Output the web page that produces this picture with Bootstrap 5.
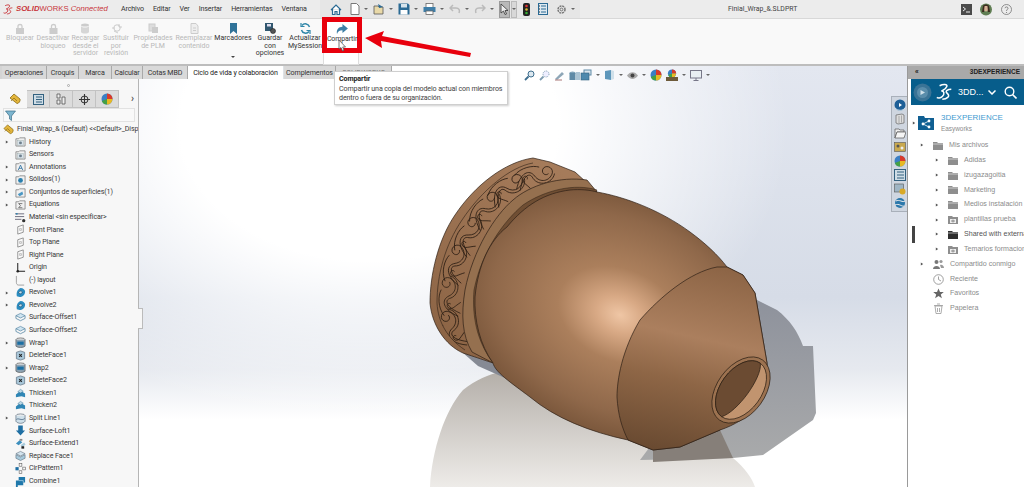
<!DOCTYPE html>
<html lang="es">
<head>
  <meta charset="UTF-8" />
  <meta name="viewport" content="width=device-width, initial-scale=1.0"/>
  <title>Finial_Wrap_&amp;.SLDPRT</title>
  <link href="https://cdn.jsdelivr.net/npm/bootstrap@5.3.2/dist/css/bootstrap.min.css" rel="stylesheet" />
  <style>
    html, body { height: 100%; }
    body {
      width: 1024px;
      height: 487px;
      overflow: hidden;
      background: #fff;
      color: #333;
      font-family: Roboto, sans-serif;
      font-size: 7.1px;
      letter-spacing: -.12px;
      line-height: 1;
      position: relative;
    }
    .ic { display: block; flex: none; }

    /* top bar */
    .sw-top { height: 19px; background: #ececec; border-bottom: 1px solid #d8d8d8; }
    .sw-brand { width: 121px; padding-left: 3px; gap: 2px; color: #c8343a; font-size: 7.7px; letter-spacing: 0; font-family: "Liberation Sans", sans-serif; }
    .sw-brand b { font-style: italic; font-weight: 700; }
    .sw-menu { gap: 9px; width: 199px; }
    .sw-tools { background: #e6e6e6; height: 18px; padding-left: 10px; width: 260px; gap: 0; }
    .sw-title { width: 380px; padding-left: 148px; font-size: 6.9px; letter-spacing: 0; color: #444; }
    .sw-caret { width: 0; height: 0; border: 2px solid transparent; border-top: 2.5px solid #666; border-bottom: 0; margin: 0 5px 0 4px; flex: none; }
    .sw-sel { background: #b9b9b9; border: 1px solid #999; height: 17px; width: 17px; }
    .sw-sel2 { background: #d8d8d8; border: 1px solid #bbb; height: 17px; width: 7px; margin: 0 6px 0 1px; }
    .sw-help { margin: 0 12px 0 9px; }

    /* ribbon */
    .sw-ribbon { height: 47px; background: #f9f9f9; border-bottom: 2px solid #bdbdbd; padding-left: 4px; }
    .sw-rb {
      border: 0; border-radius: 0; padding: 4px 0 0; background: none;
      font-size: 7px; line-height: 7.6px; letter-spacing: 0; color: #333; text-align: center;
      flex: none; display: flex; flex-direction: column; align-items: center;
    }
    .sw-rb:disabled { color: #b8b8b8; opacity: 1; background: none; }
    .sw-rb .ic { margin-bottom: 1px; }
    .w-a { width: 32px; } .w-b { width: 34px; } .w-c { width: 31px; } .w-d { width: 30px; }
    .w-e { width: 44px; } .w-f { width: 38px; } .w-g { width: 40px; } .w-h { width: 34px; }
    .w-i { width: 36px; }
    .sw-dropcaret { width: 0; height: 0; border: 2px solid transparent; border-top: 2.5px solid #444; border-bottom: 0; margin-top: 13px; }

    /* work area */
    .sw-work { height: 421px; position: relative; }
    .sw-tabs {
      position: absolute; top: 0; left: 0; z-index: 3; height: 13px; width: 392px; padding-left: 2px;
      background: #d4d4d4; border: 0; flex-wrap: nowrap;
    }
    .sw-tabs .nav-link {
      border: 0; border-right: 1px solid #a9a9a9; border-radius: 0; margin: 0; padding: 0;
      height: 13px; line-height: 13px; font-size: 7.1px; color: #333; background: #d9d9d9; text-align: center;
      white-space: nowrap;
    }
    .sw-tabs .nav-link.active { background: #fff; color: #222; }
    .t1 { width: 45px; } .t2 { width: 32px; } .t3 { width: 33px; } .t4 { width: 31px; }
    .t5 { width: 45px; } .t6 { width: 96px; } .t7 { width: 52px; } .t8 { width: 56px; color: #777 !important; }

    /* feature manager */
    .sw-left { width: 139px; flex: none; background: #f7f7f7; border-right: 1px solid #b5b5b5; padding-top: 13px; }
    .sw-grip { height: 11px; padding-top: 5px; }
    .sw-dot { width: 3px; height: 3px; border: 1px solid #aaa; border-radius: 50%; margin-left: 67px; }
    .sw-pm { height: 18px; padding-left: 2px; }
    .sw-pm-cell { width: 23px; height: 18px; background: #dcdcdc; border: 1px solid #c2c2c2; border-left: 0; }
    .sw-pm-cell.on { background: #f7f7f7; border: 0; width: 25px; }
    .sw-chev { margin-left: 12px; font-size: 10px; font-weight: 700; color: #555; }
    .sw-filter { height: 14px; margin: 0 3px; background: #f9f9f9; border: 1px solid #e2e2e2; padding-left: 1px; }
    .sw-tree { background: transparent; border-radius: 0; margin-top: 1px; }
    .sw-tree .list-group-item {
      background: transparent; border: 0; padding: 0; height: 12.57px; line-height: 12.57px;
      color: #3a3a3a; font-size: 7.1px; white-space: nowrap; overflow: hidden;
    }
    .sw-tw { width: 15px; flex: none; padding-left: 5px; }
    .sw-tw2 { width: 3px; flex: none; }
    .sw-tree .ic { margin-right: 3px; }
    .sw-tw .ic { margin: 0; }
    .sw-handle { position: absolute; left: 138px; top: 242px; width: 5px; height: 21px; background: #f7f7f7; border: 1px solid #bbb; border-left: 0; z-index: 2; }

    /* graphics area */
    .sw-view {
      flex: 1 1 auto; position: relative; overflow: hidden;
      background:
        radial-gradient(ellipse 420px 300px at 230px 60px, #fff 45%, rgba(255,255,255,0) 100%),
        linear-gradient(180deg, #e3e7f0 0, #d6dce7 55%, #e6e9ef 72%, #fff 84%, #fff 100%);
    }
    .sw-model { display: block; position: absolute; left: 0; top: 0; }
    .sw-hud { position: absolute; left: 385px; top: 3px; }
    .sw-hud .sw-caret { margin: 0 0 0 4px; }
    .sw-vbar { position: absolute; right: 0; top: 30px; width: 16px; padding-top: 2px; background: #cfd6e0; border: 1px solid #a9b0ba; border-right: 0; z-index: 2; }
    .sw-vbar .ic { margin: 0 auto 2px; }

    /* task pane */
    .sw-right { width: 117px; flex: none; background: #fff; border-left: 1px solid #9a9a9a; padding-left: 3px; position: relative; }
    .sw-rhead { height: 13px; margin-left: -3px; background: #a9a9a9; color: #222; font-size: 6.5px; letter-spacing: 0; font-weight: 700; padding: 0 4px 0 7px; font-family: "Liberation Sans", sans-serif; }
    .sw-blue { height: 26px; background: #075d8b; color: #cfe0ea; font-size: 9px; letter-spacing: 0; padding-left: 2px; }
    .sw-blue span { width: 26px; margin-left: 4px; font-family: "Liberation Sans", sans-serif; }
    .sw-search { margin-left: 8px; }
    .sw-drive { font-family: "Liberation Sans", sans-serif; font-size: 7.1px; letter-spacing: 0; color: #8b8b8b; }
    .sw-list { margin-top: 3px; }
    .sw-drive .list-group-item {
      background: transparent; border: 0; padding: 0; height: 14.85px; line-height: 14.85px;
      color: #8b8b8b; white-space: nowrap; display: flex; align-items: center;
    }
    .sw-root { height: 30px; padding: 5px 0 0 1px; }
    .sw-root-tw { margin-right: 2px; }
    .sw-root-ic { margin-right: 7px; }
    .sw-root-name { color: #3f9bd0; font-size: 8px; margin-top: 1px; }
    .sw-root-sub { color: #8b8b8b; font-size: 6.4px; margin-top: 4px; }
    .lv1 { padding-left: 9px !important; }
    .lv2 { padding-left: 24px !important; }
    .sw-drive .list-group-item .ic { margin-right: 6px; }
    .sw-drive .list-group-item .ic:first-child { margin-right: 9px; }
    .sw-sp { width: 13px; flex: none; }
    .sw-drive .cur { color: #555; }
    .sw-marker { position: absolute; left: 4px; top: 160px; width: 3px; height: 17px; background: #444; }

    /* callouts */
    .sw-tip {
      position: absolute; left: 334px; top: 71px; width: 174px; height: 34px; z-index: 6;
      background: #fff; border: 1px solid #cfcfcf; box-shadow: 1px 1px 2px rgba(0,0,0,.2);
      padding: 3px 0 0 4px; font-size: 7.1px; line-height: 8.8px; color: #444; white-space: nowrap;
    }
    .sw-tip b { display: block; color: #222; margin-bottom: 1.5px; }
    .sw-share {
      position: absolute; left: 322px; top: 17px; width: 40px; height: 36px; z-index: 5;
      background: #fff; border: 5px solid #e8000d; display: flex; flex-direction: column; align-items: center;
      padding-top: 2px; font-size: 7px; color: #333;
    }
    .sw-share .ic { margin-bottom: 2px; }
    .sw-under { position: absolute; left: 323px; top: 52px; width: 36px; height: 13px; background: #fff; border: 1px solid #ddd; border-top: 0; z-index: 4; }
    .sw-arrow { position: absolute; left: 360px; top: 25px; z-index: 7; }
    .sw-cursor { position: absolute; left: 338px; top: 39px; z-index: 8; }
  </style>
</head>
<body>
  <svg width="0" height="0" class="position-absolute">
    <defs>
      <symbol id="tw" viewBox="0 0 5 5"><path d="M1 0.5L4 2.5L1 4.5Z" fill="#555"/></symbol>
      <symbol id="logo" viewBox="0 0 20 20"><path d="M4 3C8 1 13 1 12 4C11 7 8 8 6 9C9 9 10 12 7 15C5 17 2 17 1 16M17 7C13 7 10 9 12 11C14 13 15 14 13 16C11 18 8 18 7 18" fill="none" stroke="currentColor" stroke-width="1.7"/></symbol>
      <symbol id="fold-g" viewBox="0 0 12 12"><path d="M1 3V11H11V2H5L4 3Z" fill="#f0f0f0" stroke="#777" stroke-width=".8"/><rect x="3" y="5" width="6" height="5" fill="#d8e2ea" stroke="#9aa" stroke-width=".5"/><circle cx="6" cy="7.500" r="1.600" fill="#6d7f8c"/></symbol>
      <symbol id="fold-b" viewBox="0 0 12 12"><path d="M1 3V11H11V2H5L4 3Z" fill="#f0f0f0" stroke="#777" stroke-width=".8"/><circle cx="6" cy="7" r="2.600" fill="#2a7fae"/></symbol>
      <symbol id="fold-s" viewBox="0 0 12 12"><path d="M1 3V11H11V2H5L4 3Z" fill="#f0f0f0" stroke="#777" stroke-width=".8"/><path d="M3 8L8 5L9 8L5 10Z" fill="#4a97c4"/></symbol>
      <symbol id="fold-a" viewBox="0 0 12 12"><path d="M1 3V11H11V2H5L4 3Z" fill="#f0f0f0" stroke="#777" stroke-width=".8"/><path d="M3.500 10L6 4.500L8.500 10M4.500 8H7.500" fill="none" stroke="#2a6f9f" stroke-width=".9"/></symbol>
      <symbol id="fold-e" viewBox="0 0 12 12"><path d="M1 3V11H11V2H5L4 3Z" fill="#f0f0f0" stroke="#777" stroke-width=".8"/><path d="M8 5H4L6 7.200L4 9.500H8" fill="none" stroke="#555" stroke-width=".8"/></symbol>
      <symbol id="mat" viewBox="0 0 12 12"><path d="M0 2H10M0 5H10M0 8H7" stroke="#667" stroke-width="1"/><circle cx="2" cy="2" r="1" fill="#2a7fae"/><circle cx="9.500" cy="9.500" r="1.800" fill="#333"/></symbol>
      <symbol id="plane" viewBox="0 0 12 12"><path d="M3 3L9 1V9L3 11Z" fill="#fafafa" stroke="#777" stroke-width=".8"/><path d="M5 5H7V7H5Z" fill="none" stroke="#999" stroke-width=".6"/></symbol>
      <symbol id="orig" viewBox="0 0 12 12"><path d="M3 1V10H11" fill="none" stroke="#222" stroke-width="1.100"/><circle cx="3" cy="10" r="1.400" fill="#222"/></symbol>
      <symbol id="sk" viewBox="0 0 12 12"><path d="M10 11H4C2.500 11 1.500 10 1.500 8V1" fill="none" stroke="#888" stroke-width=".8"/></symbol>
      <symbol id="rev" viewBox="0 0 12 12"><path d="M2 10C1 6 3 2 6 1C9 1 11 3 11 5C11 8 9 11 5 11Z" fill="#2b8cc0"/><path d="M4 6C5 4 7 4 8 5.500C7 8 5 8 4 6Z" fill="#bfe0f0" stroke="#123" stroke-width=".5"/></symbol>
      <symbol id="soff" viewBox="0 0 12 12"><path d="M1 4L6 1.500L11 4L6 6.500Z" fill="#cfe4f0" stroke="#4d7f9f" stroke-width=".7"/><path d="M1 7L6 9.500L11 7M1 4V7M11 4V7" fill="none" stroke="#4d7f9f" stroke-width=".8"/></symbol>
      <symbol id="wrap" viewBox="0 0 12 12"><ellipse cx="6" cy="3" rx="5" ry="2" fill="#ddd" stroke="#555" stroke-width=".7"/><path d="M1 3V10C3 12 9 12 11 10V3" fill="#8da3b3" stroke="#555" stroke-width=".7"/><rect x="2.500" y="5" width="7" height="3.500" fill="#1c6fa3"/></symbol>
      <symbol id="dfac" viewBox="0 0 12 12"><path d="M1.500 2.500L6 1L10.500 2.500V9.500L6 11L1.500 9.500Z" fill="#a9c7d9" stroke="#567" stroke-width=".7"/><path d="M4.500 4.500L7.500 7.500M7.500 4.500L4.500 7.500" stroke="#222" stroke-width="1.100"/></symbol>
      <symbol id="thk" viewBox="0 0 12 12"><path d="M1 7L6 3L11 6V10L7 9L1 10Z" fill="#2f86b5"/><path d="M3 4L6 1.500L9 3.500L6 5.500Z" fill="#bcd9e8" stroke="#2d6b8f" stroke-width=".5"/></symbol>
      <symbol id="spl" viewBox="0 0 12 12"><ellipse cx="6" cy="3" rx="5" ry="2" fill="#eee" stroke="#567" stroke-width=".7"/><path d="M1 3V9C3 12 9 12 11 9V3" fill="#cfe0ea" stroke="#567" stroke-width=".7"/><path d="M1.500 7C4 5 7 9 10.500 6" fill="none" stroke="#246" stroke-width=".7"/></symbol>
      <symbol id="lof" viewBox="0 0 12 12"><path d="M3.500 0.500H8.500V6H11L6 11.500L1 6H3.500Z" fill="#1f6fa3"/></symbol>
      <symbol id="ext" viewBox="0 0 12 12"><path d="M1 6L5 2.500L8 4.500L4 8Z" fill="#3d8fbe"/><path d="M6 8L10 5L11.500 7L8 10Z" fill="#a8cadb"/><rect x="7" y="9" width="3" height="2.600" fill="#222"/><rect x="5" y="1" width="3" height="2" fill="#888"/></symbol>
      <symbol id="rep" viewBox="0 0 12 12"><path d="M1 4L6 1.500L11 4L6 6.500Z" fill="#d3e4ee" stroke="#567" stroke-width=".6"/><path d="M1 5V9L6 11.500L11 9V5L6 7.500Z" fill="#a8c9db" stroke="#567" stroke-width=".6"/></symbol>
      <symbol id="cir" viewBox="0 0 12 12"><rect x="4.500" y="0.500" width="3" height="3" fill="none" stroke="#555" stroke-width=".6"/><rect x="8.500" y="4.500" width="3" height="3" fill="none" stroke="#555" stroke-width=".6"/><rect x="4.500" y="8.500" width="3" height="3" fill="none" stroke="#555" stroke-width=".6"/><rect x="0.500" y="4.500" width="3.500" height="3.500" fill="#1f6fa3"/></symbol>
      <symbol id="com" viewBox="0 0 12 12"><path d="M4 1H11V7H9V10H3V12H1V5H4Z" fill="#1f78ab"/><path d="M4 5H9V7" fill="none" stroke="#bfe0f0" stroke-width=".7"/></symbol>
      <symbol id="part" viewBox="0 0 12 12"><path d="M1 5L5 1L11 6C11.500 8 10 10.500 8 10.500Z" fill="#e4b63c" stroke="#8a6c17" stroke-width=".8"/><path d="M2 8L5 5L8 8" fill="none" stroke="#8a6c17" stroke-width=".7"/></symbol>
      <symbol id="dfold" viewBox="0 0 10 9"><path d="M0 1H4L5 2H10V9H0Z" fill="#8e8e8e"/><path d="M0 3H10" stroke="#dcdcdc" stroke-width=".8"/></symbol>
      <symbol id="dfold-k" viewBox="0 0 10 9"><path d="M0 1H4L5 2H10V9H0Z" fill="#2e2e2e"/><path d="M0 3H10" stroke="#ccc" stroke-width=".8"/></symbol>
      <symbol id="dfold-p" viewBox="0 0 10 9"><path d="M0 1H4L5 2H10V9H0Z" fill="#8e8e8e"/><rect x="2" y="4" width="6" height="4" fill="#eee"/><path d="M3 6H7M5 4.500V7.500" stroke="#777" stroke-width=".8"/></symbol>
      <symbol id="colorball" viewBox="0 0 12 12"><circle cx="6" cy="6" r="5.500" fill="#3b7fc4"/><path d="M6 6V0.500A5.500 5.500 0 0 1 11.500 6Z" fill="#d93a2b"/><path d="M6 6H11.500A5.500 5.500 0 0 1 6 11.500Z" fill="#e8b923"/><path d="M6 6V11.500A5.500 5.500 0 0 1 .8 8Z" fill="#45a045"/></symbol>
      <symbol id="globe" viewBox="0 0 12 12"><circle cx="6" cy="6" r="5.500" fill="#1d5f97"/><path d="M5 4L8 6L5 8Z" fill="#fff"/><path d="M1 9C4 12 9 12 11 9" fill="none" stroke="#cfe0ea" stroke-width=".9"/></symbol>
    </defs>
  </svg>

  <!-- barra superior -->
  <div class="sw-top d-flex align-items-center">
    <div class="sw-brand d-flex align-items-center">
      <svg class="ic" width="11" height="11"><use href="#logo"/></svg>
      <span><b>SOLID</b>WORKS&nbsp;<i>Connected</i></span>
    </div>
    <div class="sw-menu d-flex align-items-center">
      <span>Archivo</span><span>Editar</span><span>Ver</span><span>Insertar</span><span>Herramientas</span><span>Ventana</span>
      <svg class="ic ms-1" width="8" height="8" viewBox="0 0 8 8"><path d="M1 7L3.500 4.500M2.500 2.500L5.500 5.500M4 1.500L6.500 4" stroke="#777" stroke-width="1.200"/></svg>
    </div>
    <div class="sw-tools d-flex align-items-center">
      <svg class="ic" width="12" height="11" viewBox="0 0 12 11"><path d="M1 6L6 1L11 6M2.500 5V10.500H5V7.500H7V10.500H9.500V5" fill="#fff" stroke="#2b6a94" stroke-width="1.200"/></svg>
      <svg class="ic ms-2" width="10" height="12" viewBox="0 0 10 12"><path d="M1 .5H6.500L9 3V11.500H1Z" fill="#fff" stroke="#777"/></svg>
      <span class="sw-caret"></span>
      <svg class="ic" width="12" height="12" viewBox="0 0 12 12"><path d="M1 3H5L6 4H10V11H1Z" fill="#e9d9a8" stroke="#555" stroke-width=".8"/><path d="M5 1L10 4L6 5Z" fill="#2b6a94"/></svg>
      <span class="sw-caret"></span>
      <svg class="ic" width="12" height="12" viewBox="0 0 12 12"><path d="M.5.5H10L11.500 2V11.500H.5Z" fill="#2b6a94"/><rect x="3" y="1" width="6" height="3.500" fill="#d7e4ec"/><rect x="2.500" y="7" width="7" height="4.500" fill="#fff"/></svg>
      <span class="sw-caret"></span>
      <svg class="ic" width="13" height="12" viewBox="0 0 13 12"><rect x="3" y=".5" width="7" height="4" fill="#fff" stroke="#666" stroke-width=".8"/><rect x=".5" y="4" width="12" height="5" fill="#3f7ea8"/><rect x="3" y="8" width="7" height="3.500" fill="#fff" stroke="#666" stroke-width=".8"/></svg>
      <span class="sw-caret"></span>
      <svg class="ic" width="12" height="10" viewBox="0 0 12 10"><path d="M4 1L1 4L4 7M1 4H7C10 4 11 6 10 9" fill="none" stroke="#bbb" stroke-width="1.500"/></svg>
      <span class="sw-caret"></span>
      <svg class="ic" width="12" height="10" viewBox="0 0 12 10"><path d="M8 1L11 4L8 7M11 4H5C2 4 1 6 2 9" fill="none" stroke="#bbb" stroke-width="1.500"/></svg>
      <span class="sw-caret"></span>
      <div class="sw-sel d-flex align-items-center justify-content-center">
        <svg class="ic" width="9" height="12" viewBox="0 0 9 12"><path d="M1 1V10L3.500 8L5 11.500L6.500 11L5 7.500H8Z" fill="#eee" stroke="#333" stroke-width=".8"/></svg>
      </div>
      <div class="sw-sel2 d-flex align-items-center justify-content-center"><span class="sw-caret m-0"></span></div>
      <svg class="ic" width="7" height="13" viewBox="0 0 7 13"><rect width="7" height="13" rx="2" fill="#222"/><circle cx="3.500" cy="3" r="1.300" fill="#d33"/><circle cx="3.500" cy="6.500" r="1.300" fill="#db3"/><circle cx="3.500" cy="10" r="1.300" fill="#3a3"/></svg>
      <svg class="ic ms-2" width="10" height="12" viewBox="0 0 10 12"><rect x=".5" y=".5" width="9" height="11" fill="#dfe9f0" stroke="#2b6a94"/><path d="M3 3H8M3 6H8M3 9H8" stroke="#2b6a94"/><path d="M1 3H2M1 6H2M1 9H2" stroke="#333"/></svg>
      <svg class="ic ms-2" width="11" height="11" viewBox="0 0 11 11"><circle cx="5.500" cy="5.500" r="3.500" fill="none" stroke="#777" stroke-width="1.500" stroke-dasharray="2 .8"/><circle cx="5.500" cy="5.500" r="1.400" fill="none" stroke="#777"/></svg>
      <span class="sw-caret"></span>
    </div>
    <div class="sw-title">Finial_Wrap_&amp;.SLDPRT</div>
    <svg class="ic ms-auto" width="11" height="11" viewBox="0 0 11 11"><rect width="11" height="11" fill="#4a4a4a"/><path d="M2 3L4.500 5L2 7M5 8H9" fill="none" stroke="#fff" stroke-width=".9"/></svg>
    <svg class="ic ms-2" width="12" height="13" viewBox="0 0 12 13"><circle cx="6" cy="6.500" r="6" fill="#5f7d52"/><ellipse cx="6" cy="5.500" rx="2.200" ry="3" fill="#d7b196"/><path d="M3 3C4 1 8 1 9 3L10 9H8L7.500 3H4.500L4 9H2Z" fill="#3c2a1f"/></svg>
    <svg class="ic sw-help" width="11" height="11" viewBox="0 0 11 11"><circle cx="5.500" cy="5.500" r="5" fill="none" stroke="#777" stroke-width=".8"/><path d="M4 4.200C4 2.500 7 2.500 7 4.200C7 5.500 5.500 5.500 5.500 7" fill="none" stroke="#777" stroke-width=".9"/><circle cx="5.500" cy="8.500" r=".6" fill="#777"/></svg>
  </div>

  <!-- cinta de opciones -->
  <div class="sw-ribbon d-flex">
    <button class="btn sw-rb w-a" disabled><svg class="ic" width="11" height="11" viewBox="0 0 11 11"><rect x="1" y="5" width="8" height="6" fill="#ccc"/><path d="M3 5V3C3 1 7 1 7 3V5" fill="none" stroke="#ccc" stroke-width="1.300"/></svg>Bloquear</button>
    <button class="btn sw-rb w-b" disabled><svg class="ic" width="11" height="11" viewBox="0 0 11 11"><rect x="1.500" y="5" width="8" height="6" fill="#ccc"/><path d="M3.500 5V3C3.500 1 7.500 1 7.500 3V5" fill="none" stroke="#ccc" stroke-width="1.300"/></svg>Desactivar<br>bloqueo</button>
    <button class="btn sw-rb w-c" disabled><svg class="ic" width="11" height="11" viewBox="0 0 11 11"><ellipse cx="5" cy="2" rx="4" ry="1.600" fill="#ccc"/><path d="M1 3V9C2 11 8 11 9 9V3C8 5 2 5 1 3Z" fill="#d6d6d6"/></svg>Recargar<br>desde el<br>servidor</button>
    <button class="btn sw-rb w-d" disabled><svg class="ic" width="11" height="11" viewBox="0 0 11 11"><path d="M1 5H4M3 8L7 10" stroke="#ccc"/><circle cx="6" cy="5" r="3.200" fill="none" stroke="#ccc"/><path d="M8 1V4H11" fill="none" stroke="#ccc"/></svg>Sustituir<br>por<br>revisión</button>
    <button class="btn sw-rb w-e" disabled><svg class="ic" width="11" height="11" viewBox="0 0 11 11"><rect x="1" y="1" width="6" height="7" fill="#ddd" stroke="#ccc"/><rect x="4" y="4" width="6" height="6" fill="#ccc"/></svg>Propiedades<br>de PLM</button>
    <button class="btn sw-rb w-f" disabled><svg class="ic" width="11" height="11" viewBox="0 0 11 11"><path d="M2 .5H7L9 3V10.500H2Z" fill="#eee" stroke="#ccc"/><path d="M4 5H7M4 7.500H7" stroke="#ccc"/></svg>Reemplazar<br>contenido</button>
    <button class="btn sw-rb w-g"><svg class="ic" width="9" height="11" viewBox="0 0 9 11"><path d="M1 0H8V11L4.500 8L1 11Z" fill="#2f7298"/></svg>Marcadores<span class="sw-dropcaret"></span></button>
    <button class="btn sw-rb w-h"><svg class="ic" width="11" height="11" viewBox="0 0 11 11"><rect x="0" y="0" width="8" height="8" fill="#31576f"/><rect x="2" y="1" width="4" height="2.500" fill="#dde"/><circle cx="8" cy="8" r="2.500" fill="#555" stroke="#222" stroke-width=".6"/></svg>Guardar<br>con<br>opciones</button>
    <button class="btn sw-rb w-i"><svg class="ic" width="11" height="11" viewBox="0 0 11 11"><path d="M9.500 4A4.300 4.300 0 0 0 2 2.500M1.500 7A4.300 4.300 0 0 0 9 8.500" fill="none" stroke="#2f86a8" stroke-width="1.500"/><path d="M1 0V3.500H4.500M10 11V7.500H6.500" fill="none" stroke="#2f86a8" stroke-width="1.200"/></svg>Actualizar<br>MySession</button>
  </div>

  <!-- zona de trabajo -->
  <div class="sw-work d-flex">
    <ul class="nav nav-tabs sw-tabs">
      <li class="nav-item"><a class="nav-link t1" href="#">Operaciones</a></li>
      <li class="nav-item"><a class="nav-link t2" href="#">Croquis</a></li>
      <li class="nav-item"><a class="nav-link t3" href="#">Marca</a></li>
      <li class="nav-item"><a class="nav-link t4" href="#">Calcular</a></li>
      <li class="nav-item"><a class="nav-link t5" href="#">Cotas MBD</a></li>
      <li class="nav-item"><a class="nav-link t6 active" href="#">Ciclo de vida y colaboración</a></li>
      <li class="nav-item"><a class="nav-link t7" href="#">Complementos</a></li>
      <li class="nav-item"><a class="nav-link t8" href="#">SOLIDWORKS</a></li>
    </ul>

    <div class="sw-left">
      <div class="sw-grip"><div class="sw-dot"></div></div>
      <div class="sw-pm d-flex align-items-center">
        <div class="sw-pm-cell on d-flex align-items-center justify-content-center"><svg class="ic" width="12" height="12"><use href="#part"/></svg></div>
        <div class="sw-pm-cell d-flex align-items-center justify-content-center"><svg class="ic" width="11" height="11" viewBox="0 0 11 11"><rect x=".5" y=".5" width="10" height="10" fill="#cfdde6" stroke="#33617f"/><path d="M3 3H9M3 5.500H9M3 8H9" stroke="#33617f"/></svg></div>
        <div class="sw-pm-cell d-flex align-items-center justify-content-center"><svg class="ic" width="10" height="12" viewBox="0 0 10 12"><path d="M1 1H4V5H1ZM6 4H9V11H6ZM1 7H4V11H1Z" fill="#eee" stroke="#555" stroke-width=".8"/></svg></div>
        <div class="sw-pm-cell d-flex align-items-center justify-content-center"><svg class="ic" width="11" height="11" viewBox="0 0 11 11"><circle cx="5.500" cy="5.500" r="3.500" fill="none" stroke="#333"/><path d="M5.500 0V11M0 5.500H11" stroke="#333" stroke-width="1.100"/></svg></div>
        <div class="sw-pm-cell d-flex align-items-center justify-content-center"><svg class="ic" width="12" height="12"><use href="#colorball"/></svg></div>
        <span class="sw-chev">›</span>
      </div>
      <div class="sw-filter d-flex align-items-center">
        <svg class="ic" width="11" height="11" viewBox="0 0 11 11"><path d="M.5 1H10.500L6.500 6V10.500L4.500 9V6Z" fill="#7cb5cf" stroke="#3c6d86" stroke-width=".7"/></svg>
      </div>
      <ul class="list-group sw-tree">
        <li class="list-group-item d-flex align-items-center"><span class="sw-tw2"></span><svg class="ic" width="11" height="11"><use href="#part"/></svg>Finial_Wrap_&amp; (Default) &lt;&lt;Default&gt;_Disp</li>
        <li class="list-group-item d-flex align-items-center"><span class="sw-tw"><svg class="ic" width="4" height="4"><use href="#tw"/></svg></span><svg class="ic" width="11" height="11"><use href="#fold-g"/></svg>History</li>
        <li class="list-group-item d-flex align-items-center"><span class="sw-tw"></span><svg class="ic" width="11" height="11"><use href="#fold-g"/></svg>Sensors</li>
        <li class="list-group-item d-flex align-items-center"><span class="sw-tw"><svg class="ic" width="4" height="4"><use href="#tw"/></svg></span><svg class="ic" width="11" height="11"><use href="#fold-a"/></svg>Annotations</li>
        <li class="list-group-item d-flex align-items-center"><span class="sw-tw"><svg class="ic" width="4" height="4"><use href="#tw"/></svg></span><svg class="ic" width="11" height="11"><use href="#fold-b"/></svg>Sólidos(1)</li>
        <li class="list-group-item d-flex align-items-center"><span class="sw-tw"><svg class="ic" width="4" height="4"><use href="#tw"/></svg></span><svg class="ic" width="11" height="11"><use href="#fold-s"/></svg>Conjuntos de superficies(1)</li>
        <li class="list-group-item d-flex align-items-center"><span class="sw-tw"><svg class="ic" width="4" height="4"><use href="#tw"/></svg></span><svg class="ic" width="11" height="11"><use href="#fold-e"/></svg>Equations</li>
        <li class="list-group-item d-flex align-items-center"><span class="sw-tw"></span><svg class="ic" width="11" height="11"><use href="#mat"/></svg>Material &lt;sin especificar&gt;</li>
        <li class="list-group-item d-flex align-items-center"><span class="sw-tw"></span><svg class="ic" width="11" height="11"><use href="#plane"/></svg>Front Plane</li>
        <li class="list-group-item d-flex align-items-center"><span class="sw-tw"></span><svg class="ic" width="11" height="11"><use href="#plane"/></svg>Top Plane</li>
        <li class="list-group-item d-flex align-items-center"><span class="sw-tw"></span><svg class="ic" width="11" height="11"><use href="#plane"/></svg>Right Plane</li>
        <li class="list-group-item d-flex align-items-center"><span class="sw-tw"></span><svg class="ic" width="11" height="11"><use href="#orig"/></svg>Origin</li>
        <li class="list-group-item d-flex align-items-center"><span class="sw-tw"></span><svg class="ic" width="11" height="11"><use href="#sk"/></svg>(-) layout</li>
        <li class="list-group-item d-flex align-items-center"><span class="sw-tw"><svg class="ic" width="4" height="4"><use href="#tw"/></svg></span><svg class="ic" width="11" height="11"><use href="#rev"/></svg>Revolve1</li>
        <li class="list-group-item d-flex align-items-center"><span class="sw-tw"><svg class="ic" width="4" height="4"><use href="#tw"/></svg></span><svg class="ic" width="11" height="11"><use href="#rev"/></svg>Revolve2</li>
        <li class="list-group-item d-flex align-items-center"><span class="sw-tw"></span><svg class="ic" width="11" height="11"><use href="#soff"/></svg>Surface-Offset1</li>
        <li class="list-group-item d-flex align-items-center"><span class="sw-tw"></span><svg class="ic" width="11" height="11"><use href="#soff"/></svg>Surface-Offset2</li>
        <li class="list-group-item d-flex align-items-center"><span class="sw-tw"><svg class="ic" width="4" height="4"><use href="#tw"/></svg></span><svg class="ic" width="11" height="11"><use href="#wrap"/></svg>Wrap1</li>
        <li class="list-group-item d-flex align-items-center"><span class="sw-tw"></span><svg class="ic" width="11" height="11"><use href="#dfac"/></svg>DeleteFace1</li>
        <li class="list-group-item d-flex align-items-center"><span class="sw-tw"><svg class="ic" width="4" height="4"><use href="#tw"/></svg></span><svg class="ic" width="11" height="11"><use href="#wrap"/></svg>Wrap2</li>
        <li class="list-group-item d-flex align-items-center"><span class="sw-tw"></span><svg class="ic" width="11" height="11"><use href="#dfac"/></svg>DeleteFace2</li>
        <li class="list-group-item d-flex align-items-center"><span class="sw-tw"></span><svg class="ic" width="11" height="11"><use href="#thk"/></svg>Thicken1</li>
        <li class="list-group-item d-flex align-items-center"><span class="sw-tw"></span><svg class="ic" width="11" height="11"><use href="#thk"/></svg>Thicken2</li>
        <li class="list-group-item d-flex align-items-center"><span class="sw-tw"><svg class="ic" width="4" height="4"><use href="#tw"/></svg></span><svg class="ic" width="11" height="11"><use href="#spl"/></svg>Split Line1</li>
        <li class="list-group-item d-flex align-items-center"><span class="sw-tw"></span><svg class="ic" width="11" height="11"><use href="#lof"/></svg>Surface-Loft1</li>
        <li class="list-group-item d-flex align-items-center"><span class="sw-tw"></span><svg class="ic" width="11" height="11"><use href="#ext"/></svg>Surface-Extend1</li>
        <li class="list-group-item d-flex align-items-center"><span class="sw-tw"></span><svg class="ic" width="11" height="11"><use href="#rep"/></svg>Replace Face1</li>
        <li class="list-group-item d-flex align-items-center"><span class="sw-tw"></span><svg class="ic" width="11" height="11"><use href="#cir"/></svg>CirPattern1</li>
        <li class="list-group-item d-flex align-items-center"><span class="sw-tw"></span><svg class="ic" width="11" height="11"><use href="#com"/></svg>Combine1</li>
      </ul>
    </div>
    <div class="sw-handle"></div>

    <div class="sw-view">
      <svg class="sw-model" width="768" height="421" viewBox="139 66 768 421">
        <defs>
          <linearGradient id="gFloor" gradientUnits="userSpaceOnUse" x1="0" y1="370" x2="0" y2="490">
            <stop offset="0" stop-color="#b3aea8"/><stop offset="1" stop-color="#efedea"/>
          </linearGradient>
          <linearGradient id="gShadow" gradientUnits="userSpaceOnUse" x1="0" y1="300" x2="0" y2="460">
            <stop offset="0" stop-color="#8e929c"/><stop offset="1" stop-color="#a9aaab"/>
          </linearGradient>
          <radialGradient id="gBody" gradientUnits="userSpaceOnUse" cx="0" cy="0" r="1" gradientTransform="translate(620 315) rotate(23) scale(190 135)">
            <stop offset="0" stop-color="#efc6a5"/><stop offset=".13" stop-color="#d8a985"/><stop offset=".34" stop-color="#ab7f5c"/><stop offset=".7" stop-color="#8f684a"/><stop offset="1" stop-color="#6d4c32"/>
          </radialGradient>
          <linearGradient id="gNose" gradientUnits="userSpaceOnUse" x1="690" y1="262" x2="648" y2="448">
            <stop offset="0" stop-color="#8d6546"/><stop offset=".38" stop-color="#ab7f5e"/><stop offset=".62" stop-color="#8e6646"/><stop offset="1" stop-color="#694a31"/>
          </linearGradient>
          <linearGradient id="gCollar" gradientUnits="userSpaceOnUse" x1="540" y1="160" x2="440" y2="340">
            <stop offset="0" stop-color="#a57b5a"/><stop offset="1" stop-color="#8c6445"/>
          </linearGradient>
          <clipPath id="cBand"><path d="M533,163 C510,167 482,190 462,220 C445,245 437,275 437,303 C438,322 447,338 465,350 L472,352 C462,335 461,315 465,290 C473,250 495,215 513,200 C530,185 560,176 587,180 L550,166Z"/></clipPath>
          <path id="orn" d="M-20,8 C-14,-8 -4,-10 0,-2 C4,6 14,6 18,-2 C20,-8 12,-12 9,-7 C7,-3 11,0 14,-2 M-17,10 C-11,-5 -4,-7 -2,0 C2,9 16,9 20,-1 M-20,-6 C-12,-13 0,-13 6,-10 M-6,10 C-10,4 -14,2 -12,-2 C-10,-5 -6,-3 -8,0" fill="none" stroke="#2e2015" stroke-width=".8"/>
        </defs>

        <!-- sombras -->
        <path d="M500,372 C540,395 690,440 733,458 C745,468 752,478 755,487 L430,487 C432,450 445,410 463,390 C475,380 490,374 500,372Z" fill="url(#gFloor)"/>
        <path d="M757,300 L777,310 C790,320 798,332 803,346 L813,346 L816,413 L813,420 L763,455 L733,458 L640,460 L700,380Z" fill="url(#gShadow)"/>
        <path d="M653,450 L720,430 L733,458 L653,462Z" fill="#867f79"/>
        <path d="M462,352 L478,366 L505,378 L510,372 L490,362Z" fill="#868a94"/>

        <!-- collar -->
        <path d="M533,158 C505,162 475,185 455,215 C438,240 430,275 430,303 C432,325 445,345 463,353 L493,363 L597,192 L575,172 L550,162Z" fill="url(#gCollar)" stroke="#2e2015" stroke-width=".7"/>
        <path d="M533,163 C510,167 482,190 462,220 C445,245 437,275 437,303 C438,322 447,338 465,350" fill="none" stroke="#2e2015" stroke-width=".6"/>
        <g clip-path="url(#cBand)">
          <use href="#orn" transform="translate(535,178) rotate(-10)"/>
          <use href="#orn" transform="translate(508,190) rotate(-32)"/>
          <use href="#orn" transform="translate(487,210) rotate(-50)"/>
          <use href="#orn" transform="translate(470,236) rotate(-60)"/>
          <use href="#orn" transform="translate(457,264) rotate(-72)"/>
          <use href="#orn" transform="translate(451,296) rotate(-88)"/>
          <use href="#orn" transform="translate(454,328) rotate(-106)"/>
        </g>
        <path d="M587,180 C560,176 530,185 513,200 C495,215 473,250 465,290 C461,315 462,335 472,352 L493,363 L597,192Z" fill="#95704f" stroke="#2e2015" stroke-width=".7"/>
        <path d="M597,190 C575,183 545,190 523,205 C505,220 482,250 474,290 C472,315 476,340 493,363 L560,250Z" fill="#6f4e33" stroke="#2e2015" stroke-width=".5"/>

        <!-- cuerpo -->
        <path d="M597,192 C625,197 660,210 690,232 C705,243 718,255 727,267 L743,275 L755,293 L767,363 L767,383 L720,430 L680,447 L653,450 L628,440 C590,432 555,418 530,397 C510,382 495,372 493,363 C480,345 474,320 475,297 C478,265 490,240 507,227 C525,205 545,193 570,190 C580,189 590,190 597,192Z" fill="url(#gBody)" stroke="#2e2015" stroke-width=".7"/>
        <path d="M717,267 C690,272 660,297 640,320 C622,350 617,380 617,397 C618,415 622,428 628,440 L653,450 L680,447 L720,430 C750,420 765,400 767,383 L767,363 L755,293 L743,275 L727,267Z" fill="url(#gNose)" stroke="#2e2015" stroke-width=".7"/>

        <!-- boca -->
        <g transform="translate(741 390) rotate(-54)">
          <ellipse rx="37" ry="24" fill="#9c7250" stroke="#2e2015" stroke-width=".7"/>
          <ellipse rx="33" ry="20.500" fill="#c1946f" stroke="#2e2015" stroke-width=".7"/>
          <path d="M-33,0 A33,20.500 0 0 1 33,0 C22,10 -20,10 -33,0Z" fill="#6b4b32" stroke="#2e2015" stroke-width=".7"/>
        </g>
      </svg>

      <div class="sw-hud d-flex align-items-center">
        <svg class="ic" width="11" height="11" viewBox="0 0 11 11"><circle cx="7" cy="4" r="3" fill="#dce8f0" stroke="#3e6e8e"/><path d="M4.500 6.500L1 10" stroke="#3e6e8e" stroke-width="1.800"/></svg>
        <svg class="ic ms-1" width="11" height="11" viewBox="0 0 11 11"><circle cx="7" cy="4" r="3" fill="#eef" stroke="#7d9bb0" stroke-dasharray="1 1"/><path d="M4.500 6.500L1 10" stroke="#7d9bb0" stroke-width="1.800"/></svg>
        <svg class="ic ms-1" width="11" height="11" viewBox="0 0 11 11"><path d="M1 9L8 2L10 4L3 10Z" fill="#8da6b7"/><path d="M1 10H8" stroke="#a77" /></svg>
        <svg class="ic ms-1" width="11" height="11" viewBox="0 0 11 11"><ellipse cx="3.500" cy="3" rx="3" ry="1.500" fill="#7fa3ba"/><rect x=".5" y="3" width="6" height="7" fill="#5f8aa6"/><rect x="7" y="2" width="4" height="8" fill="#aac3d3"/></svg>
        <svg class="ic" width="12" height="12" viewBox="0 0 12 12"><rect x="4" y="1" width="7" height="5" fill="#dbe6ee" stroke="#5f8aa6"/><rect x="1" y="4" width="8" height="7" fill="#4f89ad" stroke="#33617f" stroke-width=".6"/></svg>
        <span class="sw-caret"></span>
        <svg class="ic ms-1" width="11" height="12" viewBox="0 0 11 12"><path d="M1 2L7 1V11L1 10Z" fill="#5e97bb"/><path d="M7 1L10 2V10L7 11Z" fill="#cfe0ea"/></svg>
        <span class="sw-caret"></span>
        <svg class="ic ms-1" width="11" height="9" viewBox="0 0 11 9"><path d="M0 4.500C3 0 8 0 11 4.500C8 9 3 9 0 4.500Z" fill="#aaa"/><circle cx="5.500" cy="4.500" r="2" fill="#444"/></svg>
        <span class="sw-caret"></span>
        <svg class="ic ms-1" width="12" height="12"><use href="#colorball"/></svg>
        <svg class="ic ms-1" width="12" height="12" viewBox="0 0 12 12"><use href="#colorball" width="12" height="9"/><rect y="8" width="12" height="4" fill="#6d5a3a"/></svg>
        <span class="sw-caret"></span>
        <svg class="ic ms-1" width="12" height="11" viewBox="0 0 12 11"><rect x=".5" y=".5" width="11" height="7.500" fill="#e8eef2" stroke="#778"/><path d="M6 8V10M3.500 10.500H8.500" stroke="#778"/></svg>
        <span class="sw-caret"></span>
      </div>

      <div class="sw-vbar">
        <svg class="ic" width="12" height="12"><use href="#globe"/></svg>
        <svg class="ic" width="12" height="12" viewBox="0 0 12 12"><path d="M2 2L8 1L10 2V10L4 11L2 10Z" fill="#ddd" stroke="#666" stroke-width=".7"/><path d="M5 3V10M7.500 2.500V9.500" stroke="#888" stroke-width=".6"/></svg>
        <svg class="ic" width="12" height="12" viewBox="0 0 12 12"><path d="M1 2H5L6 3H10V5H3L1 11Z" fill="#eee" stroke="#555" stroke-width=".7"/><path d="M3 5H12L10 11H1Z" fill="#f5f5f5" stroke="#555" stroke-width=".7"/></svg>
        <svg class="ic" width="12" height="12" viewBox="0 0 12 12"><rect x=".5" y="1.500" width="11" height="9" fill="#c9a94f" stroke="#555" stroke-width=".6"/><circle cx="4" cy="5" r="1.500" fill="#555"/><circle cx="8" cy="7" r="1.500" fill="#eee"/></svg>
        <svg class="ic" width="12" height="12"><use href="#colorball"/></svg>
        <svg class="ic" width="12" height="12" viewBox="0 0 12 12"><rect x=".5" y=".5" width="11" height="11" fill="#cfdde6" stroke="#33617f"/><path d="M3 3H10M3 6H10M3 9H10" stroke="#33617f"/></svg>
        <svg class="ic" width="12" height="12" viewBox="0 0 12 12"><rect x=".5" y="1" width="9" height="8" fill="#9fb5c4" stroke="#555" stroke-width=".6"/><circle cx="8.500" cy="8.500" r="3" fill="#d9a926"/></svg>
        <svg class="ic" width="12" height="12" viewBox="0 0 12 12"><circle cx="6" cy="6" r="5" fill="#2c78ab"/><path d="M2 4C5 2 9 6 11 4M1 8C5 6 8 10 10 9" stroke="#eee" fill="none"/></svg>
      </div>
    </div>

    <div class="sw-right">
      <div class="sw-rhead d-flex align-items-center justify-content-between"><span>«</span><span>3DEXPERIENCE</span></div>
      <div class="sw-blue d-flex align-items-center text-white">
        <svg class="ic" width="19" height="19" viewBox="0 0 19 19"><circle cx="9.500" cy="9.500" r="9" fill="#3a7396"/><circle cx="9.500" cy="9.500" r="5.500" fill="#5a8dab"/><path d="M7.500 7L12 9.500L7.500 12Z" fill="#cfe0ea"/></svg>
        <svg class="ic ms-1" width="18" height="18"><use href="#logo"/></svg>
        <span>3DD...</span>
        <svg class="ic ms-1" width="8" height="5" viewBox="0 0 8 5"><path d="M.5.5L4 4L7.500.5" fill="none" stroke="#fff" stroke-width="1.500"/></svg>
        <svg class="ic sw-search" width="13" height="13" viewBox="0 0 13 13"><circle cx="5.500" cy="5.500" r="4.300" fill="none" stroke="#fff" stroke-width="1.400"/><path d="M8.500 8.500L12.500 12.500" stroke="#fff" stroke-width="1.600"/></svg>
      </div>
      <div class="sw-root d-flex align-items-center sw-drive">
        <svg class="ic sw-root-tw" width="4" height="4"><use href="#tw"/></svg>
        <svg class="ic sw-root-ic" width="16" height="15" viewBox="0 0 16 15"><path d="M0 1H6L7 3H16V15H0Z" fill="#0f5f92"/><circle cx="5" cy="9" r="1.400" fill="#fff"/><circle cx="11" cy="6" r="1.400" fill="#fff"/><circle cx="11" cy="12" r="1.400" fill="#fff"/><path d="M5 9L11 6M5 9L11 12" stroke="#fff" stroke-width=".8"/></svg>
        <div><div class="sw-root-name">3DEXPERIENCE</div><div class="sw-root-sub">Easyworks</div></div>
      </div>
      <ul class="list-group sw-drive sw-list rounded-0">
        <li class="list-group-item lv1"><svg class="ic" width="4" height="4"><use href="#tw"/></svg><svg class="ic" width="10" height="9"><use href="#dfold"/></svg>Mis archivos</li>
        <li class="list-group-item lv2"><svg class="ic" width="4" height="4"><use href="#tw"/></svg><svg class="ic" width="10" height="9"><use href="#dfold"/></svg>Adidas</li>
        <li class="list-group-item lv2"><svg class="ic" width="4" height="4"><use href="#tw"/></svg><svg class="ic" width="10" height="9"><use href="#dfold"/></svg>izugazagoitia</li>
        <li class="list-group-item lv2"><svg class="ic" width="4" height="4"><use href="#tw"/></svg><svg class="ic" width="10" height="9"><use href="#dfold"/></svg>Marketing</li>
        <li class="list-group-item lv2"><svg class="ic" width="4" height="4"><use href="#tw"/></svg><svg class="ic" width="10" height="9"><use href="#dfold"/></svg>Medios instalación</li>
        <li class="list-group-item lv2"><svg class="ic" width="4" height="4"><use href="#tw"/></svg><svg class="ic" width="10" height="9"><use href="#dfold-p"/></svg>plantillas prueba</li>
        <li class="list-group-item lv2 cur"><svg class="ic" width="4" height="4"><use href="#tw"/></svg><svg class="ic" width="10" height="9"><use href="#dfold-k"/></svg>Shared with externa</li>
        <li class="list-group-item lv2"><svg class="ic" width="4" height="4"><use href="#tw"/></svg><svg class="ic" width="10" height="9"><use href="#dfold-p"/></svg>Temarios formacion</li>
        <li class="list-group-item lv1"><svg class="ic" width="4" height="4"><use href="#tw"/></svg><svg class="ic" width="11" height="10" viewBox="0 0 11 10"><circle cx="3.500" cy="3" r="2" fill="#777"/><path d="M0 10C0 6 7 6 7 10Z" fill="#777"/><circle cx="8" cy="2.500" r="1.600" fill="#999"/><path d="M7 6C9 5 11 7 11 9H8Z" fill="#999"/></svg>Compartido conmigo</li>
        <li class="list-group-item lv1"><span class="sw-sp"></span><svg class="ic" width="11" height="11" viewBox="0 0 11 11"><circle cx="5.500" cy="5.500" r="4.800" fill="none" stroke="#888" stroke-width=".8"/><path d="M5.500 2.500V5.500L8 7" fill="none" stroke="#888" stroke-width=".8"/></svg>Reciente</li>
        <li class="list-group-item lv1"><span class="sw-sp"></span><svg class="ic" width="11" height="11" viewBox="0 0 11 11"><path d="M5.500.5L7 4H10.800L7.800 6.400L8.900 10.300L5.500 8L2.100 10.300L3.200 6.400L.2 4H4Z" fill="#666"/></svg>Favoritos</li>
        <li class="list-group-item lv1"><span class="sw-sp"></span><svg class="ic" width="11" height="11" viewBox="0 0 11 11"><path d="M2 3H9L8 10.500H3Z" fill="none" stroke="#999" stroke-width=".8"/><path d="M1 2.500H10M4 1H7M4.500 5V9M6.500 5V9" stroke="#999" stroke-width=".8"/></svg>Papelera</li>
      </ul>
      <div class="sw-marker"></div>
    </div>
  </div>

  <!-- botón resaltado y ayuda -->
  <div class="sw-under"></div>
  <div class="sw-share">
    <svg class="ic" width="12" height="10" viewBox="0 0 13 11"><path d="M7 0L13 5L7 10V7C4 7 2 8 1 11C0 6 3 3 7 3Z" fill="#3d7fa6"/></svg>
    Compartir
  </div>
  <svg class="sw-cursor" width="9" height="13" viewBox="0 0 9 13"><path d="M1 1V10L3 8.500L4.500 12L6 11.300L4.700 8H7.500Z" fill="#fff" stroke="#555" stroke-width=".8"/></svg>
  <svg class="sw-arrow" width="115" height="35" viewBox="360 25 115 35"><path d="M365,38 L384,31 L382,36 L471,53 L470,57 L381,41 L382,48Z" fill="#e8000d"/></svg>
  <div class="sw-tip"><b>Compartir</b>Compartir una copia del modelo actual con miembros<br>dentro o fuera de su organización.</div>

  <script src="https://cdn.jsdelivr.net/npm/bootstrap@5.3.2/dist/js/bootstrap.bundle.min.js"></script>
</body>
</html>
